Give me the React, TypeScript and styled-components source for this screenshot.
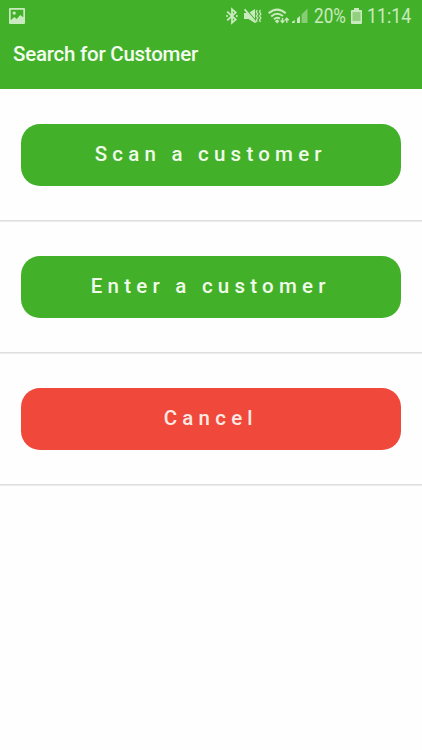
import React from "react";
import styled, { createGlobalStyle } from "styled-components";

const GlobalStyle = createGlobalStyle`
  * { box-sizing: border-box; }
  body { margin: 0; background: #fefefe; font-family: Roboto, sans-serif; }
`;

const Screen = styled.div`
  display: flex;
  flex-direction: column;
  min-height: 100vh;
  background: #fefefe;
`;

const Header = styled.header`
  height: 89px;
  background: #43b02a;
  color: #f4fcf0;
`;

const StatusBar = styled.div`
  display: flex;
  align-items: center;
  height: 32px;
  padding: 0 11px 0 9px;
  color: #c9eabf;
`;

const StatusIcon = styled.svg<{ $gap?: number }>`
  display: block;
  flex: none;
  margin-left: ${(p) => p.$gap ?? 0}px;
`;

const Spacer = styled.div`
  flex: 1;
`;

const StatusText = styled.span<{ $width: number; $gap: number; $scale: number }>`
  width: ${(p) => p.$width}px;
  margin-left: ${(p) => p.$gap}px;
  font-size: 20px;
  line-height: 32px;
  white-space: nowrap;
  transform: scaleX(${(p) => p.$scale});
  transform-origin: left center;
`;

const Title = styled.h1`
  margin: 0;
  padding: 8px 13px 0;
  font-size: 20.5px;
  line-height: 28px;
  font-weight: 500;
  letter-spacing: -0.24px;
`;

const Row = styled.section`
  height: 132px;
  padding: 35px 21.5px 0 21px;
  border-bottom: 1px solid #dedede;
  box-shadow: 0 1px 0 #ececec;
`;

const ActionButton = styled.button<{ $danger?: boolean }>`
  display: block;
  width: 100%;
  height: 61.5px;
  padding: 0 0 2px;
  border: 0;
  border-radius: 19px;
  background: ${(p) => (p.$danger ? "#f0483a" : "#43b02a")};
  color: ${(p) => (p.$danger ? "#fde9e4" : "#f0fbe9")};
  font: 500 20.5px/58px Roboto, sans-serif;
  letter-spacing: 5.23px;
  text-align: center;
`;

export default function App() {
  return (
    <Screen>
      <GlobalStyle />
      <Header>
        <StatusBar>
          <StatusIcon width="16" height="16" viewBox="0 0 16 16">
            <path
              fill="currentColor"
              fillRule="evenodd"
              d="M1 0h14q1 0 1 1v14q0 1-1 1H1q-1 0-1-1V1q0-1 1-1zM1.7 1.7v10.5L5.3 9l2.4 2L11.2 7l3.1 2.2V1.7zM5.2 3.4a1.7 1.7 0 1 1 0 3.4 1.7 1.7 0 0 1 0-3.4z"
            />
          </StatusIcon>
          <Spacer />
          <StatusIcon width="12" height="18" viewBox="0 0 12 18" fill="none" stroke="currentColor" strokeWidth="1.8">
            <path d="M1.2 4.7 9.7 12.6 6 15.8V2.2l3.7 3.2-8.5 7.9" />
            <path d="M1 9h.1M10.8 9h.1" strokeWidth="2" strokeLinecap="round" />
          </StatusIcon>
          <StatusIcon $gap={6} width="18" height="18" viewBox="0 0 18 18">
            <path fill="currentColor" d="M0 6h4.5L11 2v14l-6.500-4H0z" />
            <path d="m1.9 2 10.500 12.500" stroke="#43b02a" strokeWidth="1.2" />
            <path d="m.6 2.300 11.200 13.200" stroke="currentColor" strokeWidth="1.8" />
            <path
              d="m13.200 3-.9 2 1.400 2-1.400 2 1.400 2-1.400 2 .9 2M16.400 3l-.9 2 1.400 2-1.400 2 1.400 2-1.400 2 .9 2"
              fill="none"
              stroke="currentColor"
              strokeWidth="1.3"
            />
          </StatusIcon>
          <StatusIcon $gap={6} width="22" height="18" viewBox="0 0 22 18" fill="none" stroke="currentColor">
            <path d="M.7 6.200q8.500-7.200 17 0M3.200 9.400q5.800-5.300 11.800-.3M6 12.200q3-2.600 6-.6" strokeWidth="2" />
            <path d="m6.800 14.100 2.400-1.700 2.200 1.700-2.200 2.500z" fill="currentColor" stroke="none" />
            <path d="M14.500 11v4.500M12.600 13.600l1.900 1.900 1.900-1.900M18.800 15.800v-4.500M16.900 13.200l1.900-1.900 1.900 1.900" strokeWidth="1.400" />
          </StatusIcon>
          <StatusIcon $gap={2} width="17" height="18" viewBox="0 0 17 18" fill="currentColor">
            <path d="M0 16v-1.200L2.800 13v3zM5 16v-4.500L8 9v7z" />
            <path d="M9.600 16V7.500L15.500 1.500V16z" opacity=".5" />
          </StatusIcon>
          <StatusText $gap={5} $width={33} $scale={0.86}>20%</StatusText>
          <StatusIcon $gap={4} width="11" height="17" viewBox="0 0 11 17">
            <path fill="currentColor" d="M3 0h5v2h2q1 0 1 1v12q0 1-1 1H1q-1 0-1-1V3q0-1 1-1h2z" />
            <path fill="#92d080" d="M1.500 4h8v9h-8z" />
          </StatusIcon>
          <StatusText $gap={5} $width={44} $scale={0.89}>11:14</StatusText>
        </StatusBar>
        <Title>Search for Customer</Title>
      </Header>
      <main>
        <Row><ActionButton>Scan a customer</ActionButton></Row>
        <Row><ActionButton>Enter a customer</ActionButton></Row>
        <Row><ActionButton $danger>Cancel</ActionButton></Row>
      </main>
    </Screen>
  );
}
